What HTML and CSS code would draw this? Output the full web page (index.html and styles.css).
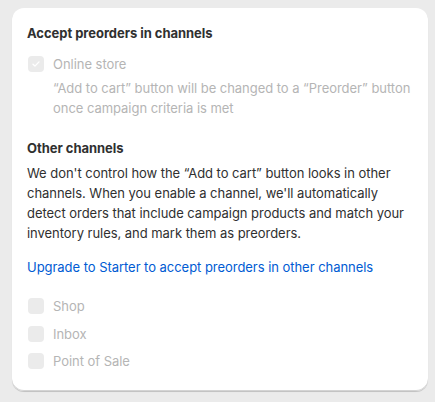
FILE: index.html
```html
<!DOCTYPE html>
<html>
<head>
    <title>Channels</title>
    <link rel="stylesheet" href="styles.css">
</head>
<body>

    <div class="card">
        <h2 class="heading">Accept preorders in channels</h2>
        <label class="choice disabled">
            <span class="box checked">
                <svg viewBox="0 0 16 16" width="12" height="12"><path d="M4 8.3l2.6 2.5L12 5.2" fill="none" stroke="#fff" stroke-width="1.8" stroke-linecap="round" stroke-linejoin="round"/></svg>
            </span>
            <span class="label">Online store</span>
        </label>
        <p class="help">“Add to cart” button will be changed to a “Preorder” button once campaign criteria is met</p>

        <h2 class="heading other">Other channels</h2>
        <p class="text">We don't control how the “Add to cart” button looks in other channels. When you enable a channel, we'll automatically detect orders that include campaign products and match your inventory rules, and mark them as preorders.</p>

        <a class="link" href="#">Upgrade to Starter to accept preorders in other channels</a>

        <div class="list">
            <label class="choice disabled"><span class="box"></span><span class="label">Shop</span></label>
            <label class="choice disabled"><span class="box"></span><span class="label">Inbox</span></label>
            <label class="choice disabled"><span class="box"></span><span class="label">Point of Sale</span></label>
        </div>
    </div>

</body>
</html>
```

FILE: styles.css
```css
body {
    margin: 0;
    padding: 8px 7px 12px 12px;
    font-family: Inter, "Noto Sans", sans-serif;
    font-size: 13px;
    line-height: 20px;
    letter-spacing: -0.04px;
    color: #303030;
    background-color: #ebebeb;
}
.card {
    background: #fff;
    border-radius: 12px;
    padding: 15px 12px 20px 15px;
    box-shadow: 0 1px 0 rgba(0, 0, 0, 0.1), 0 1px 1px rgba(0, 0, 0, 0.08), inset 0 -1px 0 #d4d4d4;
}
.heading {
    margin: 0;
    font-size: 13px;
    font-weight: 650;
    line-height: 20px;
}
.heading.other {
    margin-top: 20px;
    margin-bottom: 5px;
}
.choice {
    display: flex;
    align-items: center;
    gap: 9px;
    height: 20px;
    margin-top: 11px;
}
.box {
    width: 16px;
    height: 16px;
    border-radius: 4px;
    background: #ebebeb;
    display: flex;
    align-items: center;
    justify-content: center;
    margin-left: 1px;
}
.disabled .label {
    color: #b5b5b5;
}
.help {
    margin: 4px 0 0 26px;
    color: #b5b5b5;
}
.text {
    margin: 0;
    padding-right: 4px;
}
.link {
    display: block;
    margin-top: 14px;
    color: #005bd3;
    text-decoration: none;
}
.list {
    margin-top: 19px;
}
.list .choice {
    margin-top: 7.5px;
}
```
